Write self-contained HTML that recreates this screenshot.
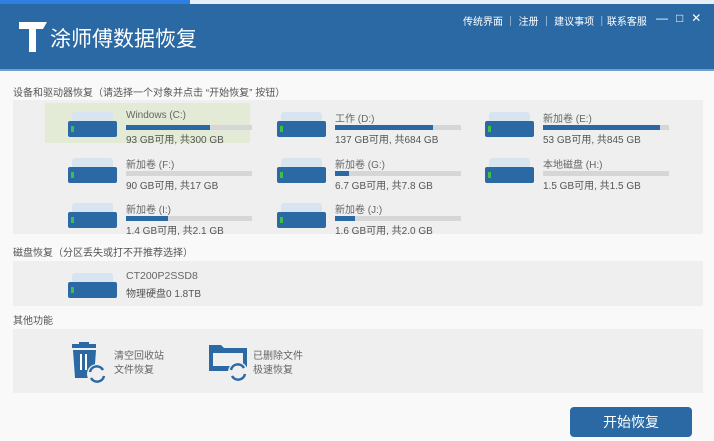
<!DOCTYPE html><html><head><meta charset="utf-8"><style>
body{margin:0;width:714px;height:441px;overflow:hidden;background:#f9f9f9;font-family:"Liberation Sans","Noto Sans CJK SC",sans-serif;position:relative}
.a{position:absolute}
.top{left:0;top:0;width:714px;height:4px;background:#e8eef5}
.hdr{left:0;top:4px;width:714px;height:65px;background:#2a69a3;border-bottom:2px solid #6fa0d0}
.ttl{left:50px;top:23px;color:#fff;font-size:21px}
.nav{left:463px;top:13px;color:#fff;font-size:10px;white-space:nowrap}
.lbl{color:#555;font-size:10px}
.panel{background:#efefef}
.dr{position:absolute;width:205px;height:42px}
.ic{position:absolute;left:22px;top:10px;width:49px;height:26px}
.ic:before{content:"";position:absolute;left:4px;top:0;width:41px;height:9px;background:#d8e4ef;border-radius:3px 3px 0 0}
.ic:after{content:"";position:absolute;left:0;top:9px;width:49px;height:16px;background:#2a69a3;border-radius:2px}
.ic i{position:absolute;left:3px;top:14px;width:3px;height:6px;background:#3fbf4a;z-index:2}
.nm{position:absolute;left:80px;top:8px;font-size:10px;color:#666}
.bar{position:absolute;left:80px;top:23px;width:126px;height:5px;background:#d6d6d6}
.bar b{display:block;height:5px;background:#2a69a3}
.sz{position:absolute;left:80px;top:29px;font-size:10px;color:#555}
.btn{left:570px;top:407px;width:122px;height:30px;background:#2a69a3;border-radius:4px;color:#fff;font-size:14px;text-align:center;line-height:30px}
.of{font-size:10px;color:#666;line-height:14px}
</style></head><body>
<div class="a top"></div><div class="a" style="left:0;top:0;width:190px;height:4px;background:#2f7fe0"></div>
<div class="a hdr"></div>
<svg class="a" style="left:19px;top:22px" width="28" height="30"><path d="M0 0H28L24 7H17V30H10V7H0Z" fill="#fff"/></svg>
<div class="a ttl">涂师傅数据恢复</div>
<div class="a nav">传统界面 ｜ 注册 ｜ 建议事项 ｜联系客服</div>
<div class="a" style="left:656px;top:11px;color:#fff;font-size:12px;letter-spacing:8px">—□✕</div>
<div class="a lbl" style="left:13px;top:84px">设备和驱动器恢复（请选择一个对象并点击 “开始恢复” 按钮）</div>
<div class="a panel" style="left:13px;top:100px;width:690px;height:134px"></div>
<div class="a" style="left:45px;top:103px;width:205px;height:40px;background:#e3ead6"></div>
<div class="dr" style="left:46px;top:102px"><div class="ic"><i></i></div><div class="nm">Windows (C:)</div><div class="bar"><b style="width:84px"></b></div><div class="sz">93 GB可用, 共300 GB</div></div>
<div class="dr" style="left:255px;top:102px"><div class="ic"><i></i></div><div class="nm">工作 (D:)</div><div class="bar"><b style="width:98px"></b></div><div class="sz">137 GB可用, 共684 GB</div></div>
<div class="dr" style="left:463px;top:102px"><div class="ic"><i></i></div><div class="nm">新加卷 (E:)</div><div class="bar"><b style="width:117px"></b></div><div class="sz">53 GB可用, 共845 GB</div></div>
<div class="dr" style="left:46px;top:148px"><div class="ic"><i></i></div><div class="nm">新加卷 (F:)</div><div class="bar"><b style="width:0"></b></div><div class="sz">90 GB可用, 共17 GB</div></div>
<div class="dr" style="left:255px;top:148px"><div class="ic"><i></i></div><div class="nm">新加卷 (G:)</div><div class="bar"><b style="width:14px"></b></div><div class="sz">6.7 GB可用, 共7.8 GB</div></div>
<div class="dr" style="left:463px;top:148px"><div class="ic"><i></i></div><div class="nm">本地磁盘 (H:)</div><div class="bar"><b style="width:0"></b></div><div class="sz">1.5 GB可用, 共1.5 GB</div></div>
<div class="dr" style="left:46px;top:193px"><div class="ic"><i></i></div><div class="nm">新加卷 (I:)</div><div class="bar"><b style="width:42px"></b></div><div class="sz">1.4 GB可用, 共2.1 GB</div></div>
<div class="dr" style="left:255px;top:193px"><div class="ic"><i></i></div><div class="nm">新加卷 (J:)</div><div class="bar"><b style="width:20px"></b></div><div class="sz">1.6 GB可用, 共2.0 GB</div></div>
<div class="a lbl" style="left:13px;top:244px">磁盘恢复（分区丢失或打不开推荐选择）</div>
<div class="a panel" style="left:13px;top:261px;width:690px;height:45px"></div>
<div class="dr" style="left:46px;top:262px"><div class="ic" style="top:11px"><i></i></div><div class="nm" style="top:8px;font-size:10.5px">CT200P2SSD8</div><div class="sz" style="top:23px">物理硬盘0 1.8TB</div></div>
<div class="a lbl" style="left:13px;top:312px">其他功能</div>
<div class="a panel" style="left:13px;top:329px;width:690px;height:64px"></div>
<svg class="a" style="left:69px;top:342px" width="38" height="42"><rect x="3" y="2" width="24" height="4" fill="#2a69a3"/><rect x="10" y="0" width="10" height="3" fill="#2a69a3"/><path d="M4 8H27L25 36H6Z" fill="#2a69a3"/><rect x="11" y="12" width="2" height="16" fill="#fff"/><rect x="16" y="12" width="2" height="16" fill="#fff"/><circle cx="28" cy="32" r="10" fill="#efefef"/><path d="M21 30A7 7 0 0 1 34 28M35 34A7 7 0 0 1 22 36" stroke="#2a69a3" stroke-width="2.5" fill="none"/></svg>
<div class="a of" style="left:114px;top:350px">清空回收站<br>文件恢复</div>
<svg class="a" style="left:209px;top:343px" width="42" height="40"><path d="M0 2H12L15 5H38V28H0Z" fill="#2a69a3"/><rect x="4" y="10" width="30" height="13" fill="#efefef"/><circle cx="29" cy="29" r="10" fill="#efefef"/><path d="M22 27A7 7 0 0 1 35 25M36 31A7 7 0 0 1 23 33" stroke="#2a69a3" stroke-width="2.5" fill="none"/></svg>
<div class="a of" style="left:253px;top:350px">已删除文件<br>极速恢复</div>
<div class="a btn">开始恢复</div>
</body></html>
